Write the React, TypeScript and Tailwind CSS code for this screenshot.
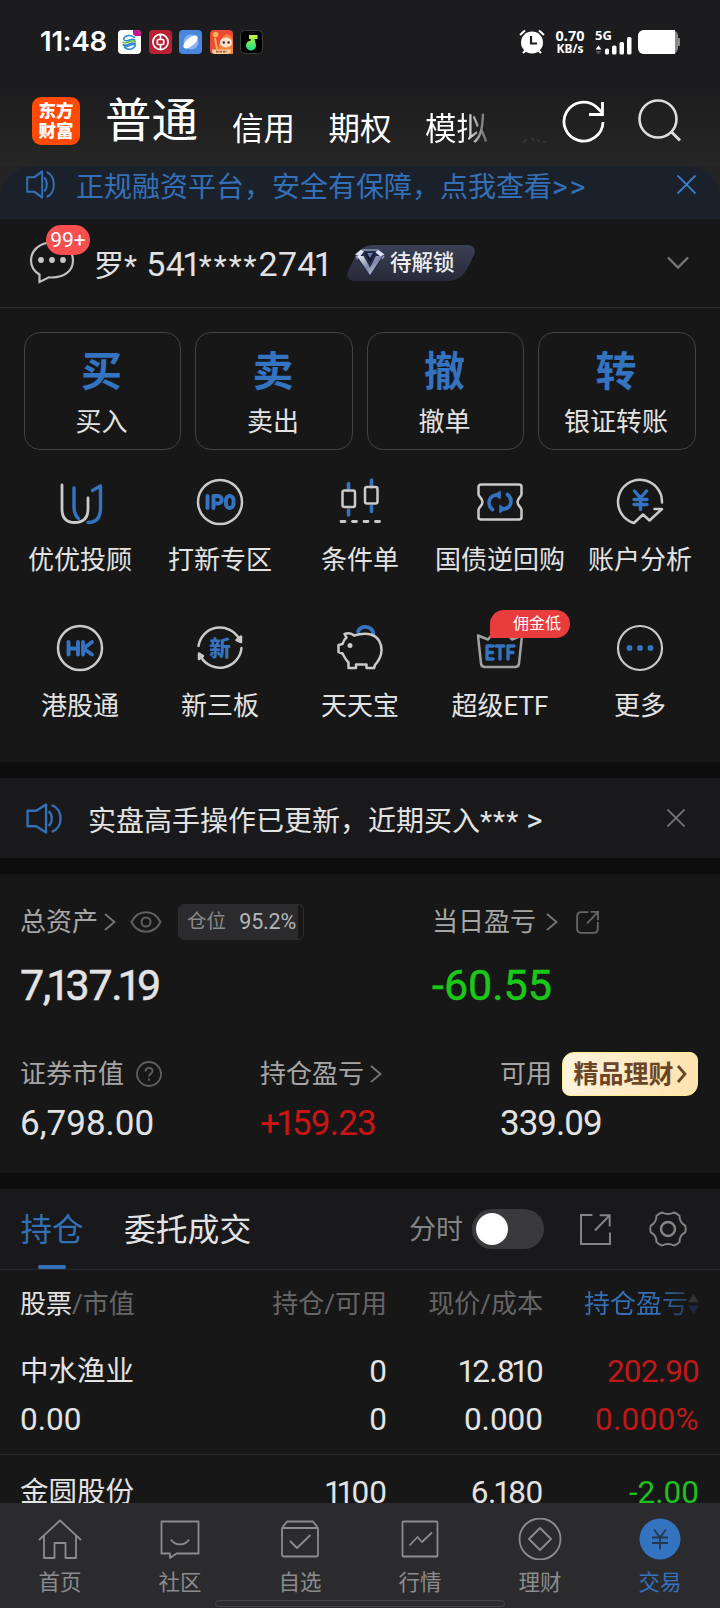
import React from "react";

/* Digits with a narrow figure one, as in the app's proportional numerals. */
function Num({ children, className = "" }: { children: string; className?: string }) {
  return (
    <span className={className}>
      {children.split(/(1)/).filter(Boolean).map((part, i) =>
        part === "1" ? (
          <span key={i} className="-ml-[0.09em] -mr-[0.08em]">1</span>
        ) : (
          <React.Fragment key={i}>{part}</React.Fragment>
        )
      )}
    </span>
  );
}

function Speaker({ w, h, className }: { w: number; h: number; className?: string }) {
  return (
    <svg width={w} height={h} viewBox="0 0 35 30" preserveAspectRatio="none" fill="none" stroke="#3470b8" strokeWidth="2.300" className={className}>
      <path d="M1.500 7.500H10L19.500 1.500v27L10 22.500H1.500z" strokeLinejoin="round" />
      <path d="M22 8c4 3 4 11 0 14M25 2c11.500 4 11.500 22 0 26" />
    </svg>
  );
}

function Cross({ size, color }: { size: number; color: string }) {
  return (
    <svg width={size} height={size} viewBox="0 0 18 18" stroke={color} strokeWidth="1.800" fill="none">
      <path d="M0.500 0.500l17 17M17.500 0.500l-17 17" />
    </svg>
  );
}

function Chevron({ className = "" }: { className?: string }) {
  return (
    <svg width="12" height="18" viewBox="0 0 12 18" stroke="#777" strokeWidth="1.800" fill="none" className={className}>
      <path d="M1 1l9.500 8L1 17" />
    </svg>
  );
}

function StatusBar() {
  return (
    <div className="flex h-[84px] shrink-0 items-center pl-[40px] pr-[40px]">
      <span className="w-[78px] text-[27.500px] font-semibold leading-none tracking-[-0.200px] text-white [font-family:Inter,sans-serif]">11:48</span>
      <div className="flex gap-[7.600px]">
        <svg width="23" height="24" viewBox="0 0 23 24">
          <rect width="23" height="24" rx="4" fill="#fff" />
          <g fill="none" strokeWidth="1.500">
            <path d="M17 8C13 4 7 5 5.500 9c1 2.500 4 2 6 1s4-1.500 6 .5" stroke="#2b8fd0" />
            <path d="M4.500 12c2.500 2 5 .5 7-.5s4.500-1 6.500 1" stroke="#64b93c" />
            <path d="M4.800 14.500c2.500 1.500 5 .5 6.700-.5s4-1.500 6 0" stroke="#2478bd" />
            <path d="M6 17c4 4 10 2.500 11.500-2-2-1-4-.5-5.500.5s-3 1.500-6 1.500" stroke="#2b8fd0" />
          </g>
          <path d="M15 0h4a4 4 0 0 1 4 4v2h-5a3 3 0 0 1-3-3z" fill="#c4178a" />
        </svg>
        <svg width="23" height="24" viewBox="0 0 23 24">
          <rect width="23" height="24" rx="4" fill="#b82034" />
          <circle cx="11.500" cy="12" r="7.600" fill="none" stroke="#fff" strokeWidth="1.700" />
          <rect x="8.300" y="9.500" width="6.400" height="5" rx="1" fill="none" stroke="#fff" strokeWidth="1.700" />
          <path d="M11.500 4.500v5M11.500 14.500v5" stroke="#fff" strokeWidth="1.700" />
        </svg>
        <svg width="23" height="24" viewBox="0 0 23 24">
          <rect width="23" height="24" rx="4" fill="#4a86dc" />
          <circle cx="12" cy="12" r="7.500" fill="#86b4f2" />
          <ellipse cx="11.500" cy="12" rx="8.800" ry="4" transform="rotate(-40 11.500 12)" fill="#fff" />
        </svg>
        <svg width="23" height="24" viewBox="0 0 23 24">
          <rect width="23" height="24" rx="4" fill="#ea4a36" />
          <path d="M8 24c0-9 3-18 9-20 4 1 6 4 6 9v11z" fill="#f4813c" />
          <circle cx="5.500" cy="4.500" r="2.800" fill="#ffb64a" />
          <path d="M5 8l2 11" stroke="#ffb64a" strokeWidth="2" />
          <ellipse cx="16" cy="12.500" rx="6" ry="5" fill="#ffe2d2" />
          <circle cx="13.800" cy="12.500" r="1.200" fill="#3a2222" />
          <circle cx="18.600" cy="12.500" r="1.200" fill="#3a2222" />
          <path d="M2 19.500h19v1a3.500 3.500 0 0 1-3.500 3.500h-12A3.500 3.500 0 0 1 2 20.500z" fill="#f7cf9a" />
          <path d="M6 21.700h11" stroke="#b5502c" strokeWidth="1.800" strokeDasharray="2.500 1" />
        </svg>
        <svg width="23" height="24" viewBox="0 0 23 24">
          <defs>
            <linearGradient id="note" x1="0" y1="0" x2="0" y2="1">
              <stop offset="0" stopColor="#c9f23a" />
              <stop offset="1" stopColor="#16e08a" />
            </linearGradient>
          </defs>
          <rect x="0.500" y="0.500" width="22" height="23" rx="4" fill="#000" stroke="#3c3c3c" />
          <path d="M9 5h8.500v4h-3l1.500 6a5 5 0 1 1-5-4.500L10.500 9H9z" fill="url(#note)" />
        </svg>
      </div>
      <div className="ml-auto flex items-center">
        <svg width="26" height="26" viewBox="0 0 26 26" className="mr-[8px]">
          <circle cx="13" cy="13.500" r="11" fill="#fff" />
          <path d="M1 6l5-4.500M25 6l-5-4.500M4 24l3-3M22 24l-3-3" stroke="#fff" strokeWidth="2.200" />
          <path d="M12 7v7.500h6" stroke="#1d1d1f" strokeWidth="2.200" fill="none" />
        </svg>
        <div className="flex w-[34px] flex-col items-center text-[14.500px] font-bold leading-[14px] text-white [font-family:'Noto_Sans',sans-serif]">
          <span>0.70</span>
          <span className="text-[12px]">KB/s</span>
        </div>
        <svg width="38" height="25" viewBox="0 0 38 25" className="ml-[8px] overflow-visible" fill="#fff">
          <text x="0" y="10" fontSize="13" fontWeight="700" fontFamily="Noto Sans, sans-serif">5G</text>
          <path d="M0.500 19.500l3-4 3 4z" />
          <path d="M0.500 21l3 3.500 3-3.500z" fill="#555" />
          <rect x="10" y="18.500" width="4" height="6" rx="1.500" />
          <rect x="17" y="15.500" width="4.500" height="9" rx="1.500" />
          <rect x="24.500" y="12" width="4.500" height="12.500" rx="1.500" />
          <rect x="32" y="7" width="4.500" height="17.500" rx="1.500" />
        </svg>
        <svg width="42" height="24" viewBox="0 0 42 24" className="ml-[5px]">
          <rect width="40" height="24" rx="6" fill="#8a8a8a" />
          <path d="M40 8h1a1 1 0 0 1 1 1v6a1 1 0 0 1-1 1h-1z" fill="#8a8a8a" />
          <path d="M6 0h31v24H6a6 6 0 0 1-6-6V6a6 6 0 0 1 6-6z" fill="#fff" />
        </svg>
      </div>
    </div>
  );
}

function Header() {
  return (
    <div className="flex h-[82px] shrink-0 items-start pl-8">
      <div className="mt-[13px] flex h-[48px] w-[48px] shrink-0 flex-col items-center justify-center rounded-[9px] bg-[#ff4b05] text-[17.500px] font-black leading-[20px] text-white">
        <span>东方</span>
        <span>财富</span>
      </div>
      <span className="ml-[25px] mt-[9px] text-[46.500px] leading-[56px] text-white">普通</span>
      <div className="ml-[34px] mt-[26px] flex w-[330px] gap-[33.500px] text-[31.500px] leading-[40px] text-white">
        <span>信用</span>
        <span>期权</span>
        <span className="bg-linear-to-r from-white from-60% to-[#666] bg-clip-text text-transparent">模拟</span>
        <svg width="24" height="8" viewBox="0 0 24 8" className="mt-[27px]" stroke="#333" strokeWidth="2" fill="none">
          <path d="M1 6l4-4M9 1l3 3M15 2l3 3M21 5h3" />
        </svg>
      </div>
      <svg width="44" height="44" viewBox="0 0 44 44" fill="none" stroke="#fff" strokeWidth="2.800" className="mt-[15px] shrink-0">
        <path d="M41 23a19.500 19.500 0 1 1-6-14.500l5 5" />
        <path d="M40.500 3v12.500H27" />
      </svg>
      <svg width="44" height="44" viewBox="0 0 44 44" fill="none" stroke="#ddd" strokeWidth="2.600" className="ml-[32px] mt-[14px] shrink-0">
        <circle cx="20" cy="21" r="18.500" />
        <path d="M33 33.500l9 9" strokeWidth="3" />
      </svg>
    </div>
  );
}

function AccountRow() {
  return (
    <div className="flex h-[89px] shrink-0 items-center border-b border-[#303030] pl-[29px] pr-[31px]">
      <div className="relative h-[46px] w-[46px] shrink-0">
        <svg width="46" height="46" viewBox="0 0 46 46" fill="none" stroke="#c0c0c0" strokeWidth="2.200">
          <path d="M10.500 34.500C4.500 31 2 26.500 2 20.500 2 10 11 2.500 23 2.500S44 10 44 20.500 35 37.500 23 37.500c-1 0-2 0-3-.2L10.500 42z" />
          <g fill="#c8c8c8" stroke="none">
            <circle cx="12" cy="20" r="2.900" />
            <circle cx="23" cy="20" r="2.900" />
            <circle cx="34" cy="20" r="2.900" />
          </g>
        </svg>
        <span className="absolute left-[17px] top-[-15px] flex h-[30px] w-[44px] items-center justify-center rounded-full bg-[#f5504f] text-[21px] leading-none text-white">99+</span>
      </div>
      <span className="ml-[19px] mt-[3px] w-[248px] whitespace-nowrap text-[30px] leading-[40px] text-[#e2e2e2]">
        罗*<span className="text-[38px]"> </span><Num className="text-[34px] tracking-[0.300px]">541</Num>
        <span className="tracking-[2px]">****</span>
        <Num className="text-[34px] tracking-[0.300px]">2741</Num>
      </span>
      <div className="relative ml-[5px] flex h-[36px] w-[128px] items-center pl-[43px]">
        <svg width="128" height="36" viewBox="0 0 128 36" className="absolute left-0 top-0">
          <defs>
            <linearGradient id="tag" x1="0" y1="0" x2="0" y2="1">
              <stop offset="0" stopColor="#3a4054" />
              <stop offset="1" stopColor="#272a38" />
            </linearGradient>
            <linearGradient id="gem" x1="0" y1="0" x2="1" y2="1">
              <stop offset="0" stopColor="#eef2ff" />
              <stop offset="0.500" stopColor="#7d88a8" />
              <stop offset="1" stopColor="#dfe3f2" />
            </linearGradient>
          </defs>
          <path d="M26 0H121c6 0 8 5 6 10l-5 10c-5 11-11 16-22 16H8c-7 0-9-5-7-10l5-10C11 6 16 0 26 0z" fill="url(#tag)" />
          <path d="M14 4.500h18l5 6-14 22.500L8 10.500z" fill="#262c48" />
          <path d="M8 9.500l6-5 3 2-4 5zM31 4.500l6.500 5-4 2-5-4z" fill="#dce2f5" />
          <path d="M15 5h16M11 14l-2-3M35 14l2-3" stroke="#8f9abf" strokeWidth="1.500" />
          <path d="M10 11h6.500l6.500 11.500L29 11h6.500L23 30z" fill="url(#gem)" />
          <path d="M17.500 8l5.500 9 5.500-9z" fill="#151a33" />
          <path d="M20 8l3 5 3-5z" fill="#6f7ca6" />
        </svg>
        <span className="relative text-[21.500px] font-medium leading-none text-[#eee]">待解锁</span>
      </div>
      <svg width="22" height="14" viewBox="0 0 22 14" fill="none" stroke="#757575" strokeWidth="2.400" className="ml-auto">
        <path d="M1 1.500l10 10 10-10" />
      </svg>
    </div>
  );
}

const actions = [
  ["买", "买入"],
  ["卖", "卖出"],
  ["撤", "撤单"],
  ["转", "银证转账"],
];

const W = "#cacaca";
const B = "#3473c0";

function Frame({ children }: { children: React.ReactNode }) {
  return (
    <svg width="48" height="48" viewBox="0 0 48 48" fill="none" stroke={W} strokeWidth="2.500" strokeLinecap="round" strokeLinejoin="round" className="overflow-visible">
      {children}
    </svg>
  );
}

const tools: { label: string; badge?: string; icon: React.ReactNode }[] = [
  {
    label: "优优投顾",
    icon: (
      <Frame>
        <path d="M6 7v24c0 9 4 13.500 12.500 13.500S32 40 32 31V20" strokeWidth="2.800" />
        <path d="M18 10v18c0 6 1.500 10 4.500 12.500M36.500 12.500L44.500 8v22c0 9-4 14.500-12.500 14.500" stroke={B} strokeWidth="3.400" />
      </Frame>
    ),
  },
  {
    label: "打新专区",
    icon: (
      <Frame>
        <circle cx="24" cy="24" r="22" />
        <g stroke={B} strokeWidth="3.900">
          <path d="M11.500 18v12M17.500 30V18h4.500a3.500 3.500 0 0 1 0 7.500h-4.500" />
          <rect x="30" y="18" width="7.500" height="12" rx="3.700" />
        </g>
      </Frame>
    ),
  },
  {
    label: "条件单",
    icon: (
      <Frame>
        <path d="M12.500 5.500v7M12.500 32v5M35.500 2v7M35.500 28.500v5" stroke={B} strokeWidth="3.600" />
        <rect x="6.500" y="12.500" width="12.500" height="16.500" rx="2" />
        <rect x="29" y="9" width="12.500" height="16.500" rx="2" />
        <path d="M5 43.500h4M16.500 43.500h4M28 43.500h4M39.500 43.500h4" strokeWidth="2.800" />
      </Frame>
    ),
  },
  {
    label: "国债逆回购",
    icon: (
      <Frame>
        <path d="M5 6.500h38a2.500 2.500 0 0 1 2.500 2.500v7c0 3-4 4-4 8s4 5 4 8v7a2.500 2.500 0 0 1-2.500 2.500H5A2.500 2.500 0 0 1 2.500 39v-7c0-3 4-4 4-8s-4-5-4-8V9A2.500 2.500 0 0 1 5 6.500z" />
        <path d="M16.500 31.500C11 27 12 18.500 20 17h3M31.500 16.500C37 21 36 29.500 28 31h-3" stroke={B} strokeWidth="3.600" />
        <path d="M24 13.500v7l-5-3.500zM24 27.500v7l5-3.500z" fill={B} stroke={B} strokeWidth="1.500" />
      </Frame>
    ),
  },
  {
    label: "账户分析",
    icon: (
      <Frame>
        <path d="M46 24.500A22 22 0 1 0 18 45l9-8.500 6.500 6L46 31h-7.500" />
        <path d="M18.500 13l6 7 6-7M24.500 20v11.500M18 21.500h13M18 26.500h13" stroke={B} strokeWidth="3.400" />
      </Frame>
    ),
  },
  {
    label: "港股通",
    icon: (
      <Frame>
        <circle cx="24" cy="24" r="22" />
        <path d="M12.500 18v12.500M22 18v12.500M12.500 24.500H22M27 18v12.500M36 18l-8.500 6.500L36 30.500" stroke={B} strokeWidth="3.900" />
      </Frame>
    ),
  },
  {
    label: "新三板",
    icon: (
      <Frame>
        <path d="M2.500 22A21.800 21.800 0 0 1 43 14.500M45.500 24A21.800 21.800 0 0 1 5 33" />
        <path d="M45 12.500v5.500l-4.500-2zM3 35v-5.500l4 2.500z" fill={W} />
        <text x="24" y="31.500" textAnchor="middle" fontSize="21.500" fontWeight="900" fill={B} stroke="none">新</text>
      </Frame>
    ),
  },
  {
    label: "天天宝",
    icon: (
      <Frame>
        <path d="M22 7.500c3-7 13.500-6 15.500 2" stroke={B} strokeWidth="3.800" />
        <path d="M8.500 10c4.500-1.500 8 0 9.500 1.500 5-1.500 13-2 17-1C42 12.500 45.500 19 45.500 26c0 6.500-3 11-6.500 15l-1 3h-7.500v-3.500H20V44h-7.500v-5.500C9 35 8 32 6.500 29.500L2.500 28v-7l4-1c1-3 2-5 4-6.500z" />
        <circle cx="14" cy="21.500" r="2.500" fill={W} stroke="none" />
      </Frame>
    ),
  },
  {
    label: "超级ETF",
    badge: "佣金低",
    icon: (
      <Frame>
        <path d="M2 11.500l10 4 5-6 7-5 7 5 5 6 10-4-3 28a4 4 0 0 1-4 3.500H9a4 4 0 0 1-4-3.500z" stroke="#a0a0a0" />
        <path d="M17 22H11v13h6M11 28.500h5.500M20 22h8M24 22v13M32 35V22h6M32 28.500h5" stroke={B} strokeWidth="3.300" />
      </Frame>
    ),
  },
  {
    label: "更多",
    icon: (
      <Frame>
        <circle cx="24" cy="24" r="22" strokeWidth="2.200" />
        <g fill={B} stroke="none">
          <circle cx="13.500" cy="24" r="2.900" />
          <circle cx="24" cy="24" r="2.900" />
          <circle cx="34.500" cy="24" r="2.900" />
        </g>
      </Frame>
    ),
  },
];

function External({ size, round }: { size: number; round?: boolean }) {
  return (
    <svg width={size} height={size} viewBox="0 0 30 30" fill="none" stroke={round ? "#666" : "#858585"} strokeWidth={round ? 2.4 : 1.9}>
      {round ? (
        <path d="M16 1.500H6.500a5 5 0 0 0-5 5v17a5 5 0 0 0 5 5h17a5 5 0 0 0 5-5v-9" />
      ) : (
        <path d="M12 1H1v28h28V18" />
      )}
      <path d="M14.500 16L28.500 1.500M19 1.200h9.700v11" />
    </svg>
  );
}

function Assets() {
  return (
    <div className="h-[299px] shrink-0 bg-[#171717] pt-[28px] text-[#a6a6a6]">
      <div className="flex h-[40px] items-center pl-[20px] text-[26px] leading-none">
        <span>总资产</span>
        <Chevron className="ml-[6px]" />
        <svg width="32" height="22" viewBox="0 0 32 22" fill="none" stroke="#606060" strokeWidth="2" className="ml-[14px]">
          <path d="M1.500 11C8 -2 24 -2 30.500 11 24 24 8 24 1.500 11z" />
          <circle cx="16" cy="11" r="4.500" />
        </svg>
        <div className="ml-[16px] flex h-[36px] w-[126px] overflow-hidden rounded-[6px] border border-[#2d2d2e]">
          <div className="flex w-[119px] shrink-0 items-center justify-between bg-[#2b2b2d] pl-[8px] pr-[2px]">
            <span className="text-[19.500px] text-[#8a8a8a]">仓位</span>
            <span className="text-[21.500px] tracking-[-0.200px] text-[#b5b5b5]">95.2%</span>
          </div>
        </div>
        <span className="ml-[128px]">当日盈亏</span>
        <Chevron className="ml-[10px]" />
        <div className="ml-[18px]"><External size={23} round /></div>
      </div>
      <div className="mt-[18px] flex h-[50px] items-center pl-[20px] text-[43px] leading-none">
        <Num className="w-[412px] tracking-[-1.300px] text-[#e3e3e3] [-webkit-text-stroke:0.500px_#e3e3e3]">7,137.19</Num>
        <span className="text-[#1ac81a] [-webkit-text-stroke:0.500px_#1ac81a]">-60.55</span>
      </div>
      <div className="mt-[42px] flex h-[44px] items-center pl-[20px] text-[26px] leading-none">
        <div className="flex w-[240px] items-center">
          <span>证券市值</span>
          <svg width="26" height="26" viewBox="0 0 26 26" fill="none" stroke="#606060" strokeWidth="1.800" className="ml-[12px]">
            <circle cx="13" cy="13" r="12" />
            <path d="M9.500 10.500c0-5 7-4.500 7-.5 0 2.500-3.500 3-3.500 5.500M13 17.500v2.300" />
          </svg>
        </div>
        <div className="flex w-[240px] items-center">
          <span>持仓盈亏</span>
          <Chevron className="ml-[6px]" />
        </div>
        <span>可用</span>
        <div className="ml-[10px] flex h-[44px] w-[136px] items-center justify-center gap-[3px] rounded-bl-[8px] rounded-br-[12px] rounded-tl-[12px] rounded-tr-[8px] border border-[#ffee90] bg-linear-to-r from-[#fff3dc] to-[#fde3ae] text-[25px] font-bold text-[#6b4526]">
          <span>精品理财</span>
          <svg width="10" height="18" viewBox="0 0 10 18" fill="none" stroke="#6b4526" strokeWidth="2.800">
            <path d="M1 1l7 8-7 8" />
          </svg>
        </div>
      </div>
      <div className="mt-[7px] flex h-[40px] items-center pl-[20px] text-[35px] leading-none text-[#e3e3e3]">
        <span className="w-[240px]">6,798.00</span>
        <Num className="w-[240px] tracking-[-0.800px] text-[#cc1414]">+159.23</Num>
        <span className="tracking-[-1px]">339.09</span>
      </div>
    </div>
  );
}

function Tabs() {
  return (
    <div className="flex h-[81px] shrink-0 items-center border-b border-[#272729] bg-[#19191b] pl-[20px] pr-[33px]">
      <div className="flex h-full w-[64px] flex-col items-center text-[31.500px] leading-none text-[#3470b8]">
        <span className="mt-[26px] whitespace-nowrap">持仓</span>
        <span className="mt-auto h-[4px] w-[28px] rounded-full bg-[#3470b8]" />
      </div>
      <span className="ml-[40px] mt-[4px] text-[31.800px] leading-none text-[#e3e3e3]">委托成交</span>
      <span className="ml-auto mt-[3px] text-[27px] leading-none text-[#858585]">分时</span>
      <div className="ml-[9px] flex h-[40px] w-[72px] items-center rounded-full bg-[#3a3a3c] pl-[4px]">
        <div className="h-[32px] w-[32px] rounded-full bg-white" />
      </div>
      <div className="ml-[36px]"><External size={31} /></div>
      <svg width="38" height="38" viewBox="0 0 38 38" fill="none" stroke="#858585" strokeWidth="1.900" strokeLinejoin="round" className="ml-[38px]">
        <path d="M13 2.500c4 2 8 2 12 0 1.500.5 4.500 2.300 5.500 3.300 0 4.500 1.500 7.700 5.700 9.800.6 2 .6 4.800 0 6.800-4.200 2.100-5.700 5.300-5.700 9.800-1 1-4 2.800-5.500 3.300-4-2-8-2-12 0-1.500-.5-4.500-2.300-5.500-3.300 0-4.500-1.500-7.700-5.700-9.800-.6-2-.6-4.800 0-6.800 4.200-2.100 5.700-5.300 5.700-9.800 1-1 4-2.800 5.500-3.300z" />
        <circle cx="19" cy="19" r="7" strokeWidth="2.400" />
      </svg>
    </div>
  );
}

const cols = "grid grid-cols-[200px_167px_156px_156px] pl-[20px]";
const line = "h-[48px] items-center text-right text-[31.500px] leading-none";

function Holdings() {
  return (
    <div className="min-h-0 flex-1 overflow-hidden bg-[#171717] text-[#e3e3e3]">
      <div className={`${cols} h-[68px] items-center text-right text-[26px] leading-none text-[#666]`}>
        <span className="text-left"><span className="text-[#e3e3e3]">股票</span>/市值</span>
        <span>持仓/可用</span>
        <span>现价/成本</span>
        <span className="flex items-center justify-end text-[#3470b8]">
          <span className="bg-linear-to-r from-[#3470b8] from-70% to-[#24405f] bg-clip-text text-transparent">持仓盈亏</span>
          <svg width="11" height="24" viewBox="0 0 12 24">
            <path d="M6 1l6 9H0z" fill="#333" />
            <path d="M6 23l6-9H0z" fill="#1c2a40" />
          </svg>
        </span>
      </div>
      <div className="border-b border-[#2a2a2a] py-[10px]">
        <div className={`${cols} ${line}`}>
          <span className="text-left text-[28.500px]">中水渔业</span>
          <span>0</span>
          <Num className="tracking-[-0.600px]">12.810</Num>
          <span className="tracking-[-0.800px] text-[#c01818]">202.90</span>
        </div>
        <div className={`${cols} ${line}`}>
          <span className="text-left">0.00</span>
          <span>0</span>
          <span>0.000</span>
          <span className="tracking-[0.300px] text-[#c01818]">0.000%</span>
        </div>
      </div>
      <div className="pt-[14px]">
        <div className={`${cols} ${line}`}>
          <span className="text-left text-[28.500px]">金圆股份</span>
          <Num>1100</Num>
          <Num className="tracking-[-0.300px]">6.180</Num>
          <span className="text-[#1ec01e]">-2.00</span>
        </div>
      </div>
    </div>
  );
}

const nav: { label: string; icon: React.ReactNode }[] = [
  { label: "首页", icon: <path d="M1 22L22 2.500 43 22M6 18v22h10.500V25h11v15H38V18" /> },
  { label: "社区", icon: <><path d="M3.500 3.500h37v32H18.500L12 40v-4.500H3.500z" /><path d="M13 21.500c4 6.500 14 6.500 18 0" /></> },
  { label: "自选", icon: <><path d="M4 10l5-6.500h26l5 6.500v26.500a2 2 0 0 1-2 2H6a2 2 0 0 1-2-2zM4 10h36" /><path d="M12 23l7 7 13.500-13" /></> },
  { label: "行情", icon: <><rect x="4.500" y="3.500" width="35" height="35" rx="1" /><path d="M11.500 27.500l8-8.500 4.500 5 10-9.500" /></> },
  { label: "理财", icon: <><circle cx="22" cy="21" r="20.500" /><path d="M22 10l11 11-11 11-11-11z" /></> },
  { label: "交易", icon: <><circle cx="22" cy="21" r="20.500" fill="#3473c0" stroke="none" /><path d="M16 11.500l6 8 6-8M22 19.500v12M14 19.500h16M14 25h16" stroke="#26364c" /></> },
];

export default function App() {
  return (
    <div className="flex h-[1608px] w-[720px] flex-col overflow-hidden bg-[#0d0d0d] [font-family:Roboto,'Noto_Sans_CJK_SC',sans-serif]">
      <div className="flex h-[166px] shrink-0 flex-col bg-linear-to-b from-[#1c1c1e] from-50% to-[#262626]">
        <StatusBar />
        <Header />
      </div>
      <div className="shrink-0 bg-[#242424]">
        <div className="flex h-[53px] items-start rounded-t-[32px] bg-[#1b212a] pl-[26px] pr-[24px] pt-[4px] text-[#3470b8]">
          <Speaker w={29} h={29} />
          <span className="ml-[21px] mt-px text-[28px] leading-[32px]">正规融资平台，安全有保障，点我查看<span className="text-[30px] tracking-[2px]">&gt;&gt;</span></span>
          <div className="ml-auto mt-[5px]"><Cross size={19} color="#3b80d0" /></div>
        </div>
      </div>
      <div className="h-[543px] shrink-0 bg-[#171717]">
        <AccountRow />
        <div className="mt-[24px] grid grid-cols-4 gap-[13.800px] pl-[23.600px] pr-[24px]">
          {actions.map(([big, label]) => (
            <div key={label} className="flex h-[118px] flex-col items-center rounded-[16px] border border-[#434343] pr-[2px] pt-[15px]">
              <span className="text-[41px] font-bold leading-[48px] text-[#3473c0]">{big}</span>
              <span className="mt-[9px] text-[26px] leading-[34px] text-[#e3e3e3]">{label}</span>
            </div>
          ))}
        </div>
        <div className="mt-[28px] grid grid-cols-5 px-[10px]">
          {tools.map((t) => (
            <div key={t.label} className="relative flex h-[146px] flex-col items-center">
              {t.icon}
              <span className="mt-[17px] whitespace-nowrap text-[26px] leading-[34px] text-[#e3e3e3]">{t.label}</span>
              {t.badge && (
                <span className="absolute left-[60px] top-[-14px] flex h-[28px] w-[80px] items-center rounded-br-[14px] rounded-tl-[14px] rounded-tr-[14px] bg-[#e93d3d] pl-[23px] text-[16px] leading-none text-white">{t.badge}</span>
              )}
            </div>
          ))}
        </div>
      </div>
      <div className="mt-4 flex h-[80px] shrink-0 items-center bg-[#19191b] pl-[26px] pr-[35px]">
        <Speaker w={36} h={31} />
        <span className="ml-[26px] mt-[5px] text-[28px] leading-none text-[#e3e3e3]">实盘高手操作已更新，近期买入<span className="tracking-[1px]">***</span> <span className="text-[31px]">&gt;</span></span>
        <div className="ml-auto"><Cross size={18} color="#777" /></div>
      </div>
      <div className="h-4 shrink-0" />
      <Assets />
      <div className="h-4 shrink-0" />
      <Tabs />
      <Holdings />
      <div className="relative grid h-[105px] shrink-0 grid-cols-6 bg-[#2b2b2d] pt-[15px]">
        {nav.map((n, i) => (
          <div key={n.label} className="flex flex-col items-center">
            <svg width="44" height="42" viewBox="0 0 44 42" fill="none" stroke="#8c8c8e" strokeWidth="1.800" strokeLinejoin="round">
              {n.icon}
            </svg>
            <span className={`mt-[10px] text-[21.500px] leading-[26px] ${i === 5 ? "text-[#3473c0]" : "text-[#8c8c8e]"}`}>{n.label}</span>
          </div>
        ))}
        <div className="absolute bottom-[1px] left-[215px] h-[7px] w-[290px] rounded-full border border-[#454547] bg-[#2b2b2d]" />
      </div>
    </div>
  );
}
